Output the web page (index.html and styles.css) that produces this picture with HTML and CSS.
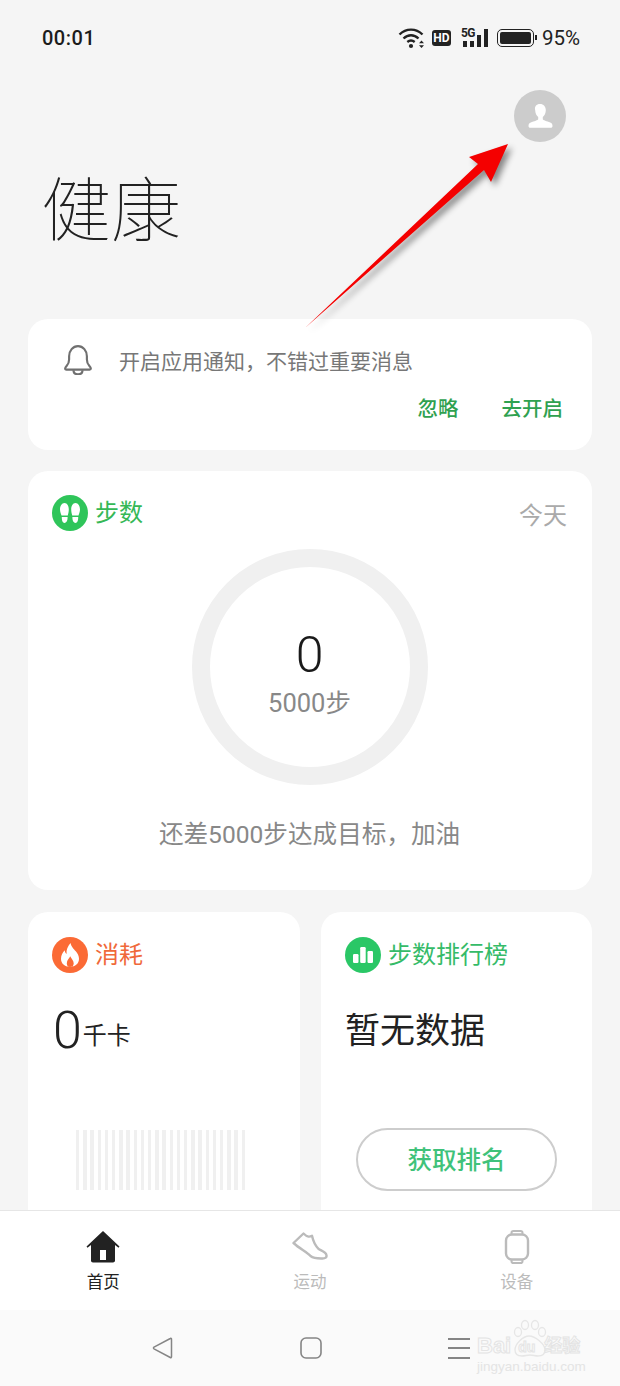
FILE: index.html
```html
<!DOCTYPE html>
<html lang="zh-CN">
<head>
    <meta charset="UTF-8">
    <meta name="viewport" content="width=device-width, initial-scale=1.0">
    <title>健康</title>
    <link rel="stylesheet" href="styles.css">
</head>
<body>
    <div class="phone">
        <div class="content">
            <div class="status-bar">
                <span class="time">00:01</span>
                <div class="status-icons">
                    <svg width="28" height="22" viewBox="0 0 28 22">
                        <path d="M1.500 7.500C8 1 18 1 24.500 7.500M5.500 11.500C10 7.200 16 7.200 20.500 11.500M9.300 15C11.600 13.200 14.400 13.200 16.700 15" fill="none" stroke="#222" stroke-width="2.400"/>
                        <circle cx="13" cy="19" r="2.100" fill="#222"/>
                        <path d="M21 16.200h5l-2.500-2.700zM21 18.200h5l-2.500 2.700z" fill="#222"/>
                    </svg>
                    <span class="hd">HD</span>
                    <div class="signal">
                        <span class="five-g">5G</span>
                        <span class="bar bar-1"></span>
                        <span class="bar bar-2"></span>
                        <span class="bar bar-3"></span>
                        <span class="bar bar-4"></span>
                    </div>
                    <div class="battery"><span class="battery-fill"></span></div>
                    <span class="percent">95%</span>
                </div>
            </div>

            <div class="top-row">
                <div class="avatar">
                    <svg width="28" height="26" viewBox="0 0 28 26">
                        <path d="M14 1c3.600 0 5.800 2.700 5.800 6.200 0 2.800-1.300 5.300-3 6.800v2.300c0 1 4.200 1.900 7.400 3.300 1.600.7 2.300 1.800 2.300 3.400 0 1.200-.6 1.800-1.800 1.800H4.300c-1.200 0-1.800-.6-1.800-1.800 0-1.600.7-2.700 2.300-3.400 3.200-1.400 7.400-2.300 7.400-3.300V14c-1.700-1.500-3-4-3-6.800C8.200 3.700 10.400 1 14 1z" fill="#fff"/>
                    </svg>
                </div>
            </div>
            <h1 class="page-title">健康</h1>

            <div class="card notice">
                <div class="notice-row">
                    <svg class="bell" width="30" height="30" viewBox="2 1.500 26 28">
                        <path d="M3 23.500c0-1 .6-1.700 1.500-2.700 1.400-1.500 2.200-3 2.200-5.800v-3C6.700 6.800 10.200 2.500 15 2.500s8.300 4.300 8.300 9.500v3c0 2.800.8 4.300 2.200 5.800.9 1 1.500 1.700 1.500 2.700 0 .7-.5 1-1.200 1H4.200c-.7 0-1.200-.3-1.200-1z" fill="none" stroke="#707070" stroke-width="2"/>
                        <path d="M10.800 25c0 2.400 1.900 3.800 4.200 3.800s4.200-1.400 4.200-3.800" fill="none" stroke="#707070" stroke-width="2"/>
                    </svg>
                    <span class="notice-text">开启应用通知，不错过重要消息</span>
                </div>
                <div class="notice-actions">
                    <span>忽略</span>
                    <span>去开启</span>
                </div>
            </div>

            <div class="card steps">
                <div class="steps-head">
                    <div class="card-title title-green">
                        <span class="round-icon icon-steps">
                            <svg width="24" height="24" viewBox="0 0 24 24">
                                <path d="M6.500 2c2.800 0 4.300 3 4.300 6.400 0 2.500-.7 4.500-1 6.200H3.500C3.200 13 2 10.900 2 8.400 2 5 3.700 2 6.500 2zM3.800 15.900h5.800c.1 3.200-.8 6-3 6s-2.900-2.800-2.800-6z" fill="#fff"/>
                                <path d="M17.500 2c-2.800 0-4.300 3-4.300 6.400 0 2.500.7 4.500 1 6.200h6.300c.3-1.600 1.500-3.700 1.500-6.200C22 5 20.300 2 17.500 2zM20.200 15.900h-5.800c-.1 3.200.8 6 3 6s2.900-2.800 2.800-6z" fill="#fff"/>
                            </svg>
                        </span>
                        <span>步数</span>
                    </div>
                    <span class="steps-date">今天</span>
                </div>
                <div class="ring">
                    <span class="ring-value">0</span>
                    <span class="ring-goal">5000步</span>
                </div>
                <p class="steps-tip">还差5000步达成目标，加油</p>
            </div>

            <div class="card-grid">
                <div class="card small-card">
                    <div class="card-title title-orange">
                        <span class="round-icon icon-burn">
                            <svg width="24" height="26" viewBox="0 0 24 26">
                                <path d="M12.500 1c1 4.300 3.200 5.800 5.300 8.300 1.900 2.200 3.200 4.700 3.200 7.500 0 4.700-3.700 8.200-9 8.200s-9-3.500-9-8.200c0-3.500 1.700-6.200 3.700-8.500.2 1.800.8 3 1.900 3.800C8 8 9.800 4.200 12.500 1zm-.3 13.300c-.7 2-3.400 3.800-3.400 7 0 1.500.6 2.700 1.400 3.700h4c.8-1 1.500-2.200 1.500-3.700 0-3-2.700-5-3.500-7z" fill="#fff" fill-rule="evenodd"/>
                            </svg>
                        </span>
                        <span>消耗</span>
                    </div>
                    <div class="burn-value"><span class="burn-num">0</span><span class="burn-unit">千卡</span></div>
                    <div class="burn-bars"></div>
                </div>

                <div class="card small-card">
                    <div class="card-title title-green-2">
                        <span class="round-icon icon-rank">
                            <svg width="24" height="20" viewBox="0 0 24 20">
                                <rect x="2" y="9" width="5.500" height="9" rx="1.200" fill="#fff"/>
                                <rect x="9.200" y="2" width="5.500" height="16" rx="1.200" fill="#fff"/>
                                <rect x="16.500" y="6" width="5.500" height="12" rx="1.200" fill="#fff"/>
                            </svg>
                        </span>
                        <span>步数排行榜</span>
                    </div>
                    <div class="no-data">暂无数据</div>
                    <div class="rank-btn">获取排名</div>
                </div>
            </div>
        </div>

        <div class="tab-bar">
            <div class="tab tab-active">
                <svg width="34" height="34" viewBox="0 0 34 34">
                    <path d="M17 1L.5 16.500l1 1.200L5 15v15.500c0 1.200.8 2 2 2h20c1.200 0 2-.8 2-2V15l3.500 2.700 1-1.200zM14 20h6v10h-6z" fill="#222" fill-rule="evenodd"/>
                </svg>
                <span>首页</span>
            </div>
            <div class="tab">
                <svg width="36" height="34" viewBox="0 0 36 34">
                    <path d="M1.500 13L11.500 3.500c1.500 1.500 3 2.800 5 3.100 1.200.2 2.500-.3 3.500-.8 1 4.500 2.800 9.500 6.500 13 1.800 1.700 7.500 3 8 6.500.3 2-1 3.200-4 3.200-4 0-8.500.3-12-2.500C15 22 8 19 1.500 13z" fill="none" stroke="#bbb" stroke-width="2.400" stroke-linejoin="round"/>
                </svg>
                <span>运动</span>
            </div>
            <div class="tab">
                <svg width="26" height="34" viewBox="0 0 26 34">
                    <rect x="2" y="4.500" width="22" height="25" rx="6" fill="none" stroke="#bbb" stroke-width="2.400"/>
                    <path d="M7.500 4V2.800C7.500 1.800 8.200 1 9.500 1h7c1.300 0 2 .8 2 1.800V4M7.500 30v1.200c0 1 .7 1.800 2 1.800h7c1.300 0 2-.8 2-1.800V30" fill="none" stroke="#bbb" stroke-width="2"/>
                </svg>
                <span>设备</span>
            </div>
        </div>

        <div class="sys-bar">
            <svg width="22" height="22" viewBox="0 0 22 22">
                <path d="M2 10.200L18.300 1.500c.7-.4 1.200 0 1.200.7v17.600c0 .7-.5 1.100-1.200.7L2 11.800c-.7-.4-.7-1.200 0-1.600z" fill="none" stroke="#858585" stroke-width="1.500"/>
            </svg>
            <svg width="22" height="22" viewBox="0 0 22 22">
                <rect x="1" y="1" width="20" height="20" rx="5" fill="none" stroke="#858585" stroke-width="1.600"/>
            </svg>
            <div class="menu-lines"><span></span><span></span><span></span></div>
        </div>

        <svg class="arrow" width="620" height="400" viewBox="0 0 620 400">
            <polygon points="508,144 469,157 478,164 305,328 484,170 491,182" fill="#f40000"/>
        </svg>

        <div class="watermark">
            <svg class="paw" width="34" height="46" viewBox="0 0 34 46">
                <g fill="none" stroke="#e6e6e6" stroke-width="1.300">
                    <ellipse cx="5" cy="13" rx="3.500" ry="4.500"/>
                    <ellipse cx="12" cy="6" rx="3.500" ry="4.500"/>
                    <ellipse cx="22" cy="6" rx="3.500" ry="4.500"/>
                    <ellipse cx="29" cy="13" rx="3.500" ry="4.500"/>
                    <path d="M16 17c-6 0-14 8-14 14 0 5 4 6 7 6 3 0 5-1 8-1s5 1 8 1c3 0 7-1 7-6 0-6-10-14-16-14z"/>
                </g>
            </svg>
            <div class="wm-main">
                <span>Bai</span>
                <span class="wm-du">du</span>
                <span class="wm-cn">经验</span>
            </div>
            <div class="wm-url">jingyan.baidu.com</div>
        </div>
    </div>
</body>
</html>
```

FILE: styles.css
```css
* {
    box-sizing: border-box;
}
body {
    margin: 0;
    font-family: Roboto, "Noto Sans CJK SC", sans-serif;
    background-color: #f5f5f5;
    color: #222;
}
.phone {
    position: relative;
    width: 620px;
    height: 1386px;
    display: flex;
    flex-direction: column;
    overflow: hidden;
}
.content {
    height: 1210px;
    padding: 0 28px;
    overflow: hidden;
    flex-shrink: 0;
}

/* status bar */
.status-bar {
    height: 75px;
    margin: 0 12px 0 14px;
    display: flex;
    justify-content: space-between;
    align-items: center;
}
.time {
    font-size: 20px;
    font-weight: 500;
    color: #1c1c1c;
    letter-spacing: 0.5px;
}
.status-icons {
    display: flex;
    align-items: center;
}
.hd {
    width: 19px;
    height: 16px;
    margin-left: 6px;
    border-radius: 3px;
    background: #222;
    color: #fff;
    font-size: 12px;
    font-weight: 700;
    line-height: 16px;
    text-align: center;
}
.signal {
    position: relative;
    width: 25px;
    height: 18px;
    margin-left: 12px;
    display: flex;
    align-items: flex-end;
    gap: 3px;
}
.five-g {
    position: absolute;
    left: -2px;
    top: -3px;
    font-size: 12px;
    line-height: 14px;
    font-weight: 700;
    letter-spacing: -0.5px;
    color: #222;
}
.bar {
    width: 4px;
    background: #222;
}
.bar-1 { height: 6px; }
.bar-2 { height: 6px; }
.bar-3 { height: 12px; }
.bar-4 { height: 18px; }
.battery {
    position: relative;
    width: 37px;
    height: 18px;
    margin-left: 9px;
    border: 1.500px solid #222;
    border-radius: 5px;
    padding: 2px;
}
.battery::after {
    content: "";
    position: absolute;
    right: -4px;
    top: 5px;
    width: 2px;
    height: 5px;
    background: #222;
}
.battery-fill {
    display: block;
    height: 100%;
    border-radius: 2px;
    background: #222;
}
.percent {
    font-size: 20.500px;
    color: #222;
    margin-left: 8px;
}

/* title */
.top-row {
    display: flex;
    justify-content: flex-end;
    padding: 15px 26px 0 0;
}
.avatar {
    width: 52px;
    height: 52px;
    border-radius: 50%;
    background: #cccccc;
    display: flex;
    justify-content: center;
    align-items: center;
}
.page-title {
    margin: 24px 0 61px 13px;
    height: 92px;
    font-size: 70px;
    font-weight: 100;
    line-height: 92px;
    color: #222;
}

/* cards */
.card {
    background: #fff;
    border-radius: 20px;
}
.notice {
    height: 131px;
    padding: 25px 29px 0 35px;
    margin-bottom: 21px;
}
.notice-row {
    display: flex;
    align-items: center;
    gap: 26px;
    height: 32px;
}
.notice-text {
    font-size: 21px;
    color: #777;
}
.notice-actions {
    display: flex;
    justify-content: flex-end;
    gap: 43px;
    margin-top: 16px;
    font-size: 20.500px;
    font-weight: 500;
    color: #2fa150;
}
.steps {
    height: 419px;
    padding: 24px 25px 0 24px;
    margin-bottom: 22px;
}
.steps-head {
    display: flex;
    justify-content: space-between;
    align-items: flex-start;
}
.card-title {
    display: flex;
    align-items: center;
    gap: 7px;
    font-size: 24px;
    line-height: 36px;
}
.title-green { color: #35b856; }
.title-green-2 { color: #35bb68; }
.title-orange { color: #f0693a; }
.round-icon {
    width: 36px;
    height: 36px;
    border-radius: 50%;
    display: flex;
    justify-content: center;
    align-items: center;
}
.icon-steps { background: #2fc55a; }
.icon-burn { background: #fb6a35; }
.icon-rank { background: #2ac766; }
.steps-date {
    font-size: 24px;
    line-height: 34px;
    color: #aaa;
    margin-top: 4px;
}
.ring {
    width: 236px;
    height: 236px;
    margin: 16px auto 0;
    border: 18px solid #f0f0f0;
    border-radius: 50%;
    display: flex;
    flex-direction: column;
    align-items: center;
    justify-content: center;
    padding-top: 12px;
    gap: 4px;
}
.ring-value {
    font-size: 50px;
    font-weight: 300;
    line-height: 56px;
    color: #1a1a1a;
}
.ring-goal {
    font-size: 25.500px;
    line-height: 32px;
    color: #888;
}
.steps-tip {
    margin: 33px 0 0;
    text-align: center;
    font-size: 24.600px;
    line-height: 34px;
    color: #888;
}
.card-grid {
    display: grid;
    grid-template-columns: 272px 271px;
    gap: 21px;
}
.small-card {
    height: 340px;
    padding: 25px 24px 0;
}
.burn-value {
    display: flex;
    align-items: center;
    margin: 23px 0 0 1px;
    height: 70px;
}
.burn-num {
    font-size: 52px;
    font-weight: 300;
    line-height: 70px;
}
.burn-unit {
    font-size: 24px;
    margin-left: 1px;
    padding-top: 4px;
}
.burn-bars {
    width: 170px;
    height: 60px;
    margin: 64px 0 0 24px;
    background: repeating-linear-gradient(90deg, #f0f0f0 0, #f0f0f0 3.400px, #fff 3.400px, #fff 7.200px);
}
.no-data {
    margin-top: 24px;
    height: 70px;
    font-size: 35px;
    line-height: 70px;
    color: #222;
}
.rank-btn {
    width: 201px;
    height: 63px;
    margin: 61px 0 0 11px;
    padding-top: 3px;
    border: 2px solid #cdcdcd;
    border-radius: 32px;
    font-size: 24.500px;
    font-weight: 500;
    line-height: 55px;
    text-align: center;
    color: #3fc27a;
}

/* bottom tabs */
.tab-bar {
    height: 100px;
    background: #fff;
    border-top: 1px solid #e6e6e6;
    display: flex;
    justify-content: space-between;
    padding: 19px 0 0 0;
    flex-shrink: 0;
}
.tab {
    width: 207px;
    display: flex;
    flex-direction: column;
    align-items: center;
    gap: 5px;
    font-size: 16.500px;
    color: #bbb;
}
.tab-active {
    color: #222;
}
.sys-bar {
    height: 76px;
    background: #fafafa;
    position: relative;
    display: flex;
    align-items: center;
    padding: 0 150px 0 152px;
    justify-content: space-between;
    flex-shrink: 0;
}
.menu-lines {
    width: 22px;
    height: 21px;
    display: flex;
    flex-direction: column;
    justify-content: space-between;
}
.menu-lines span {
    height: 2px;
    background: #858585;
}

/* overlays */
.arrow {
    position: absolute;
    left: 0;
    top: 0;
    filter: drop-shadow(4px 4px 3px rgba(0, 0, 0, 0.45));
}
.watermark {
    position: absolute;
    left: 477px;
    top: 1318px;
    width: 110px;
    height: 56px;
}
.paw {
    position: absolute;
    left: 36px;
    top: 1px;
}
.wm-main {
    position: absolute;
    left: 0;
    top: 16px;
    height: 24px;
    display: flex;
    align-items: center;
    font-family: "Liberation Sans", "Noto Sans CJK SC", sans-serif;
    font-size: 22px;
    font-weight: 700;
    line-height: 24px;
    white-space: nowrap;
    color: #fafafa;
    -webkit-text-stroke: 1px #e4e4e4;
}
.wm-du {
    font-size: 14px;
    margin: 2px 0 0 7px;
}
.wm-cn {
    font-size: 18px;
    margin-left: 9px;
}
.wm-url {
    position: absolute;
    left: 0;
    top: 41px;
    font-family: "Liberation Sans", sans-serif;
    font-size: 13.500px;
    line-height: 15px;
    white-space: nowrap;
    color: #e4e4e4;
}
```
